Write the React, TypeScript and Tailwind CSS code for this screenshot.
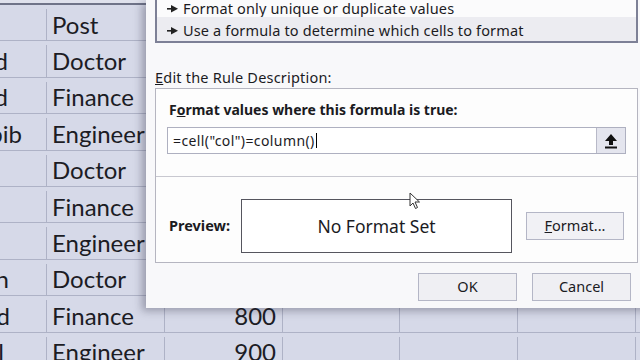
import React from "react";

const rows = [
  { a: "", apr: "pr-[38px]", b: "Post", c: "" },
  { a: "Ahmad", apr: "pr-[38px]", b: "Doctor", c: "100" },
  { a: "Javed", apr: "pr-[38px]", b: "Finance", c: "200" },
  { a: "Habib", apr: "pr-[24px]", b: "Engineer", c: "300" },
  { a: "", apr: "pr-[38px]", b: "Doctor", c: "400" },
  { a: "", apr: "pr-[38px]", b: "Finance", c: "500" },
  { a: "", apr: "pr-[38px]", b: "Engineer", c: "600" },
  { a: "Rajesh", apr: "pr-[37px]", b: "Doctor", c: "700" },
  { a: "Farid", apr: "pr-[36px]", b: "Finance", c: "800" },
  { a: "Kamal", apr: "pr-[42px]", b: "Engineer", c: "900" },
];

function Sheet() {
  return (
    <div className="flex flex-col bg-[#d6d9e8]" style={{ fontFamily: "Lato, 'Open Sans', sans-serif" }}>
      <div className="h-[3px] bg-[#dfe1ec]" />
      <div className="h-[2px] bg-[#6f7388]" />
      {rows.map((r, i) => (
        <div key={i} className="flex h-[36.4px] shrink-0 border-b border-[#aeb2c6] pt-[4px] text-[24px] leading-none text-[#1c1c24]">
          <div className={`flex w-[47px] shrink-0 items-center justify-end overflow-hidden whitespace-nowrap border-r border-[#aeb2c6] ${r.apr}`}>
            {r.a}
          </div>
          <div className="flex w-[118px] shrink-0 items-center overflow-hidden whitespace-nowrap border-r border-[#aeb2c6] pl-[5px]">
            {r.b}
          </div>
          <div className="flex w-[118px] shrink-0 items-center justify-end border-r border-[#aeb2c6] pr-[6px]">
            {r.c}
          </div>
          <div className="w-[117px] shrink-0 border-r border-[#aeb2c6]" />
          <div className="w-[118px] shrink-0 border-r border-[#aeb2c6]" />
          <div className="w-[118px] shrink-0 border-r border-[#aeb2c6]" />
          <div className="flex-1" />
        </div>
      ))}
    </div>
  );
}

function Bullet() {
  return (
    <svg width="11" height="8" viewBox="0 0 11 8" className="shrink-0">
      <rect x="0" y="3" width="5" height="1.6" fill="#222" />
      <path d="M4 0 L11 3.8 L4 7.6 Z" fill="#222" />
    </svg>
  );
}

function UpIcon() {
  return (
    <svg width="14" height="16" viewBox="0 0 14 16">
      <path d="M7 1 L13 8 L9 8 L9 12 L5 12 L5 8 L1 8 Z" fill="#111" />
      <rect x="1" y="13.5" width="12" height="2" fill="#111" />
    </svg>
  );
}

function Cursor() {
  return (
    <svg width="12" height="18" viewBox="0 0 12 18">
      <path d="M1 1 L1 14 L4 11 L6.5 16.5 L8.5 15.5 L6 10 L10.5 10 Z" fill="#fff" stroke="#333" strokeWidth="1" strokeLinejoin="round" />
    </svg>
  );
}

function Dialog() {
  return (
    <div
      className="absolute left-[146px] top-0 flex h-[308px] w-[520px] flex-col bg-[#f8f8fa] pl-[9px] text-[14.5px] text-[#1b1b1f] shadow-[-4px_3px_8px_rgba(40,40,60,0.35)]"
      style={{ fontFamily: "'Noto Sans', 'Open Sans', sans-serif" }}
    >
      {/* rule type list */}
      <div className="flex h-[43px] w-[483px] shrink-0 flex-col border-x-2 border-b-2 border-[#7d8096] bg-[#fbfbfc]">
        <div className="flex h-[17px] items-center gap-[5px] pl-[10px] leading-none tracking-[0.15px]">
          <Bullet />
          <span>Format only unique or duplicate values</span>
        </div>
        <div className="flex h-[24px] items-center gap-[5px] bg-[#ececf1] pl-[10px] pt-[3px] leading-none tracking-[0.15px]">
          <Bullet />
          <span>Use a formula to determine which cells to format</span>
        </div>
      </div>

      <div className="mt-[24px] h-[20px] leading-[20px] tracking-[0.2px]">
        <u>E</u>dit the Rule Description:
      </div>

      {/* rule description box */}
      <div className="mt-[1px] flex h-[175px] w-[483px] flex-col border border-[#b5b5c0] bg-[#fdfdfd]">
        <div className="px-[13px] pt-[11px] text-[14px] font-bold leading-[20px]">
          F<u>o</u>rmat values where this formula is true:
        </div>
        <div className="mx-[11px] mt-[7px] flex h-[27px] border border-[#aeb0c0] bg-white">
          <div className="flex flex-1 items-center pl-[5px] text-[14px] tracking-[0.4px]">
            =cell("col")=column()
            <span className="ml-[1px] inline-block h-[15px] w-[1px] bg-black" />
          </div>
          <div className="flex w-[29px] items-center justify-center border-l border-[#b8b9c8] bg-[#e4e5ee]">
            <UpIcon />
          </div>
        </div>
        <div className="mt-[22px] h-[1px] bg-[#c8c8d0]" />
        <div className="flex items-center pl-[13px] pr-[13px] pt-[22px]">
          <div className="w-[72px] font-bold">Preview:</div>
          <div className="flex h-[54px] w-[271px] items-center justify-center border-[1.5px] border-[#55555e] bg-white text-[17.5px]">
            No Format Set
          </div>
          <div className="ml-[14px] flex h-[28px] w-[98px] items-center justify-center border border-[#b4b6c6] bg-[#f1f1f5]">
            <u>F</u>ormat...
          </div>
        </div>
      </div>

      <div className="mt-[10px] flex w-[476px] justify-end gap-[15px]">
        <div className="flex h-[28px] w-[99px] items-center justify-center border border-[#b4b6c6] bg-[#efeff3]">OK</div>
        <div className="flex h-[28px] w-[99px] items-center justify-center border border-[#b4b6c6] bg-[#efeff3]">Cancel</div>
      </div>
    </div>
  );
}

export default function App() {
  return (
    <div className="relative h-[360px] w-[640px] overflow-hidden bg-[#d6d9e8]">
      <Sheet />
      <Dialog />
      <div className="absolute left-[409px] top-[192px]">
        <Cursor />
      </div>
    </div>
  );
}
